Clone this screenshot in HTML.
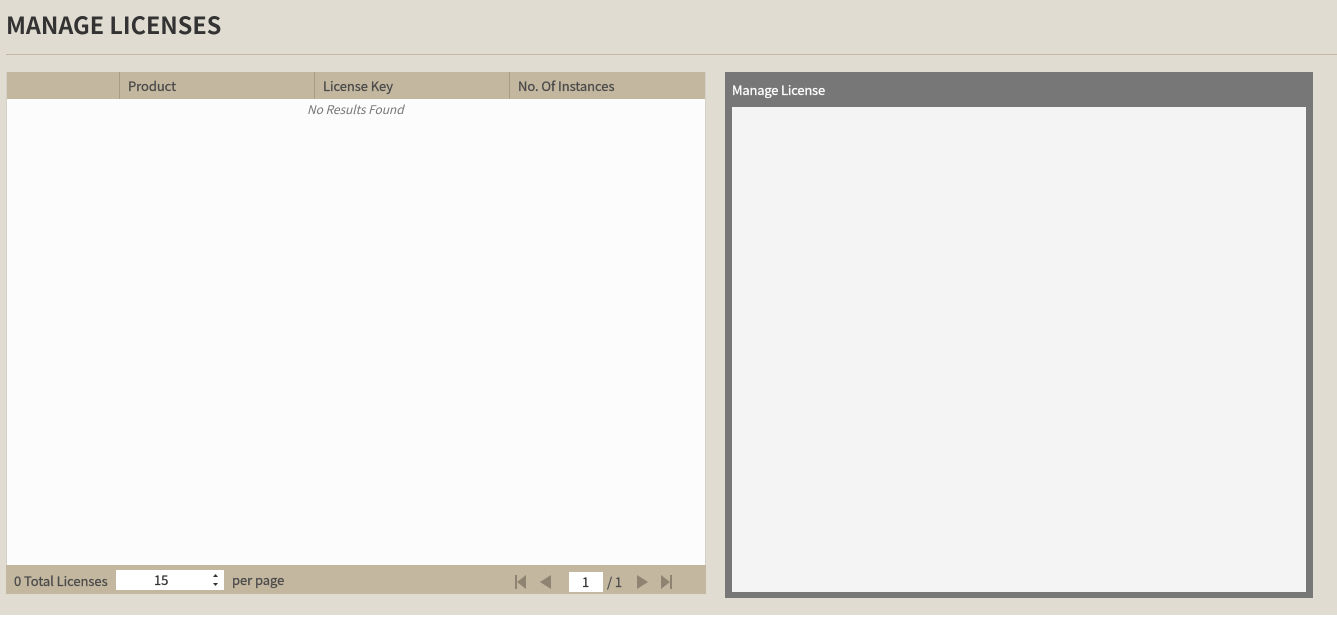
<!DOCTYPE html>
<html lang="en">
<head>
<meta charset="utf-8">
<title>Manage Licenses</title>
<style>
html,body{margin:0;padding:0;background:#fff;}
body{width:1337px;height:617px;overflow:hidden;position:relative;font-family:"Noto Sans CJK SC","Liberation Sans",sans-serif;color:#4a4a4a;}
div,span{position:absolute;box-sizing:border-box;white-space:nowrap;}
svg{position:absolute;display:block;}
.t{font-size:13px;line-height:20px;letter-spacing:-0.06px;-webkit-text-stroke:0.25px currentColor;}
</style>
</head>
<body>
<div style="left:0;top:0;width:1337px;height:615px;background:#e0dcd1;"></div>
<div style="left:6px;top:8px;font-size:23.35px;line-height:32px;font-weight:700;color:#333;">MANAGE LICENSES</div>
<div style="left:6px;top:54px;width:1331px;height:1px;background:#c3b7a0;"></div>

<div style="left:6px;top:72px;width:700px;height:522px;background:#fcfcfc;border:1px solid #d3d0c7;border-top:0;border-bottom:0;"></div>
<div style="left:7px;top:72px;width:698px;height:27px;background:#c3b7a0;"></div>
<div style="left:119px;top:72px;width:1px;height:27px;background:#a89c86;"></div>
<div style="left:314px;top:72px;width:1px;height:27px;background:#a89c86;"></div>
<div style="left:509px;top:72px;width:1px;height:27px;background:#a89c86;"></div>
<div class="t" style="left:128px;top:76px;">Product</div>
<div class="t" style="left:323px;top:76px;">License Key</div>
<div class="t" style="left:518px;top:76px;">No. Of Instances</div>
<div class="t" style="left:307px;top:100px;font-size:12px;font-style:italic;color:#777;-webkit-text-stroke:0;">No Results Found</div>

<div style="left:6px;top:565px;width:700px;height:29px;background:#c3b7a0;"></div>
<div class="t" style="left:14px;top:571px;">0 Total Licenses</div>
<div style="left:116px;top:570px;width:108px;height:20px;background:#fff;"></div>
<div class="t" style="left:154px;top:570px;color:#333;">15</div>
<svg style="left:210px;top:572px;" width="10" height="16" viewBox="0 0 10 16"><path d="M3 5 L5.500 2 L8 5 Z M3 11 L8 11 L5.500 14 Z" fill="#333"/></svg>
<div class="t" style="left:232px;top:570px;">per page</div>

<svg style="left:512px;top:572px;" width="170" height="20" viewBox="0 0 170 20" fill="#8f8472">
<rect x="3" y="3" width="2" height="14"/><path d="M5 10 L14 3 L14 17 Z"/>
<path d="M28 10 L39 3 L39 17 Z"/>
<path d="M125 3 L136 10 L125 17 Z"/>
<path d="M149 3 L158 10 L149 17 Z"/><rect x="158" y="3" width="2" height="14"/>
</svg>
<div style="left:569px;top:572px;width:34px;height:20px;background:#fff;"></div>
<div class="t" style="left:582px;top:572px;color:#333;">1</div>
<div class="t" style="left:607px;top:572px;">/ 1</div>

<div style="left:725px;top:72px;width:588px;height:526px;background:#777;"></div>
<div style="left:732px;top:107px;width:574px;height:485px;background:#f4f4f4;"></div>
<div class="t" style="left:732px;top:80px;color:#fff;letter-spacing:-0.2px;">Manage License</div>
</body>
</html>
